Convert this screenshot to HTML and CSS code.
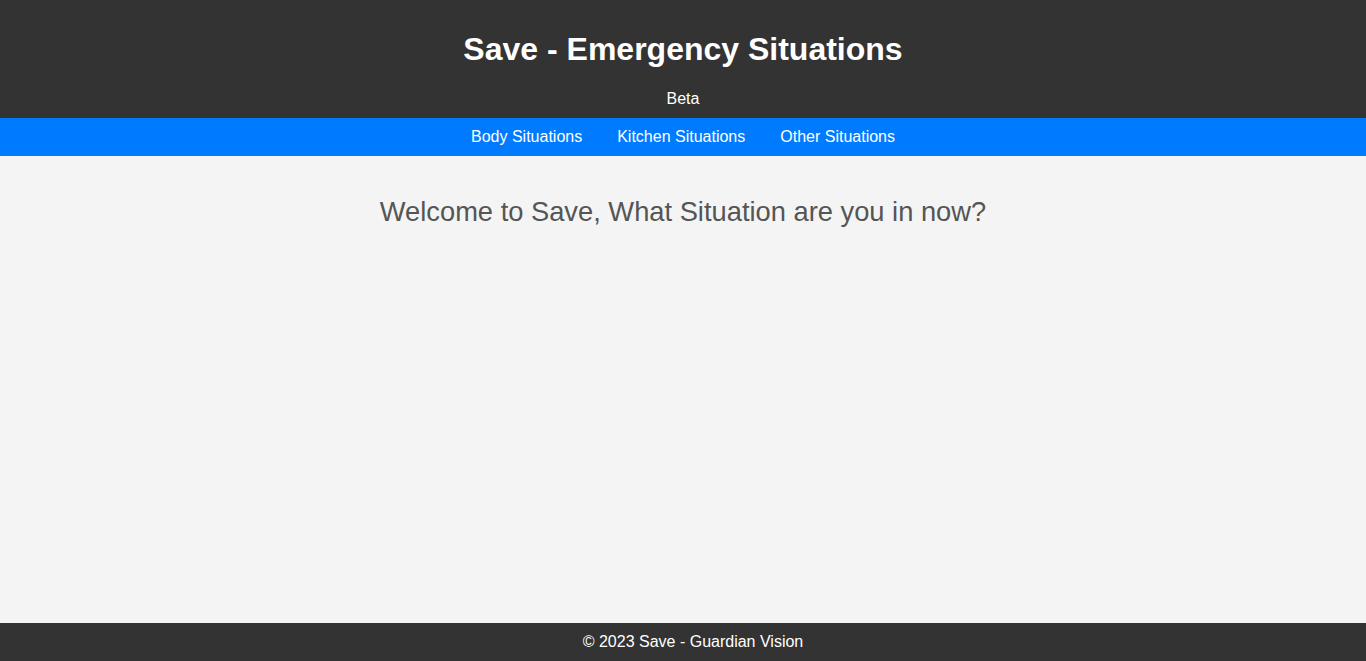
FILE: index.html
```html
<!DOCTYPE html>
<html lang="en">
<head>
<meta charset="utf-8">
<title>Save - Emergency Situations</title>
<link rel="stylesheet" href="styles.css">
</head>
<body>
<header class="site-header">
  <h1 class="site-title">Save - Emergency Situations</h1>
  <p class="site-tag">Beta</p>
</header>
<nav class="site-nav">
  <a href="#">Body Situations</a>
  <a href="#">Kitchen Situations</a>
  <a href="#">Other Situations</a>
</nav>
<main class="content">
  <h2 class="welcome">Welcome to Save, What Situation are you in now?</h2>
</main>
<footer class="site-footer">
  <p>© 2023 Save - Guardian Vision</p>
</footer>
</body>
</html>
```
FILE: styles.css
```css
html, body { margin: 0; padding: 0; }
body {
  font-family: "Liberation Sans", Arial, sans-serif;
  background: #f4f4f4;
  color: #333;
  min-height: 100vh;
  display: flex;
  flex-direction: column;
}
.site-header {
  background: #333;
  color: #fff;
  text-align: center;
  padding: 10px 0;
}
.site-title {
  font-size: 32px;
  margin: 21px 0 22px;
  line-height: 37px;
}
.site-tag {
  margin: 0;
  font-size: 16px;
  line-height: 18px;
}
.site-nav {
  background: #007bff;
  display: flex;
  justify-content: center;
  gap: 35px;
  padding: 10px 0;
  line-height: 18px;
}
.site-nav a {
  color: #fff;
  text-decoration: none;
  font-size: 16px;
}
.content {
  flex: 1;
  text-align: center;
  padding: 20px;
}
.welcome {
  font-weight: normal;
  font-size: 27.3px;
  color: #555;
  margin: 20px 0;
  line-height: 31px;
}
.site-footer {
  background: #333;
  color: #fff;
  text-align: center;
  padding: 10px 0 10px 20px;
}
.site-footer p {
  margin: 0;
  font-size: 16px;
  line-height: 18px;
}
```
